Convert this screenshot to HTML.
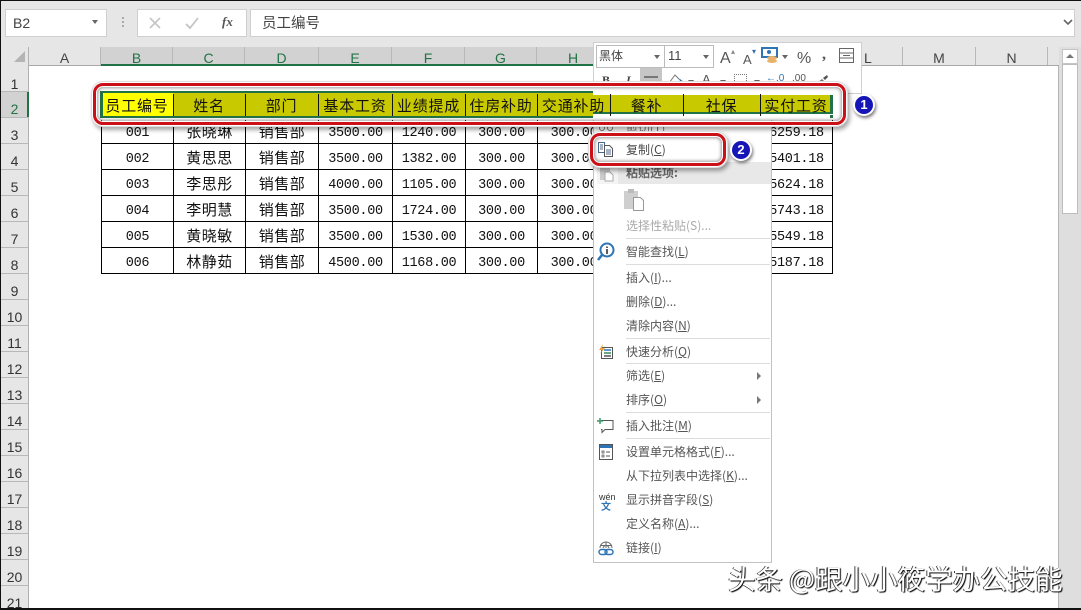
<!DOCTYPE html>
<html><head><meta charset="utf-8"><style>
html,body{margin:0;padding:0}
#p{position:relative;width:1081px;height:610px;overflow:hidden;background:#e6e6e6;font-family:"Liberation Sans","Noto Sans CJK SC",sans-serif;color:#444}
#p div,#p span.a{position:absolute;box-sizing:border-box}
.box{background:#fff;border:1px solid #cfcfcf}
.ch{top:47px;height:18px;font-size:14px;line-height:22px;text-align:center;color:#444;border-right:1px solid #b8b8b8}
.sel{background:#d2d2d2;color:#217346}
.rh{left:1px;width:27px;font-size:14px;text-align:center;color:#333;line-height:14px}
.rl{left:1px;width:28px;height:1px;background:#b8b8b8}
table{position:absolute;left:101px;top:117px;border-collapse:collapse;table-layout:fixed;background:#fff}
td{border:1px solid #000;height:19px;padding:4px 0 2px;text-align:center;font-size:15px;letter-spacing:.5px;color:#111;font-family:"Noto Sans CJK SC",sans-serif;line-height:19px;white-space:nowrap;overflow:hidden}
td.n{font-family:"Liberation Mono",monospace;font-size:13.5px;letter-spacing:-.3px;padding:6px 0 0}
.hd{font-size:15px;letter-spacing:.8px;color:#111;font-family:"Noto Sans CJK SC",sans-serif;text-align:center;top:96px;height:20px;line-height:20px;white-space:nowrap}
.vl{top:94px;height:22px;width:1px;background:#111}
.m{left:626px;font-size:12px;line-height:16px;color:#555;white-space:nowrap;font-family:"Noto Sans CJK SC",sans-serif}
.sep{left:626px;width:144px;height:1px;background:#dcdcdc}
.fr{border:3px solid #cc1018;border-radius:10px;box-shadow:0 0 0 1px #fff,0 0 0 2px #ddd,2px 3px 4px 2px rgba(0,0,0,.35),inset 0 0 0 1px #fff,inset 0 0 3px 2px rgba(90,90,90,.6)}
.bd{width:22px;height:22px;border-radius:50%;background:#1616b8;border:2px solid #fff;box-shadow:1px 2px 3px rgba(0,0,0,.55);color:#fff;font:bold 13px/18px "Liberation Sans",sans-serif;text-align:center}
.tri{width:0;height:0;border-left:4px solid #777;border-top:4px solid transparent;border-bottom:4px solid transparent}
.dn{width:0;height:0;border-top:4px solid #666;border-left:3.5px solid transparent;border-right:3.5px solid transparent}
</style></head><body><div id="p">

<div style="left:0;top:0;width:1081px;height:1px;background:#111"></div>
<div style="left:0;top:0;width:1px;height:610px;background:#111"></div>

<div class="box" style="left:5px;top:9px;width:102px;height:28px;font-size:14px;line-height:26px;padding-left:7px;color:#444">B2</div>
<div class="dn" style="left:92px;top:20px"></div>
<div style="left:122px;top:17px;width:2px;height:2px;background:#aaa;box-shadow:0 4px #aaa,0 8px #aaa"></div>
<div class="box" style="left:137px;top:9px;width:110px;height:28px"></div>
<svg style="position:absolute;left:148px;top:16px" width="80" height="14" viewBox="0 0 80 14"><path d="M2 2l10 10M12 2L2 12" stroke="#c4c4c4" stroke-width="1.6" fill="none"/><path d="M38 8l4 4 8-10" stroke="#c4c4c4" stroke-width="1.8" fill="none"/></svg>
<div style="left:222px;top:14px;font:italic bold 13px/16px 'Liberation Serif',serif;color:#555">fx</div>
<div class="box" style="left:250px;top:9px;width:825px;height:28px;font-size:14.5px;line-height:25px;padding-left:11px;color:#444;font-family:'Noto Sans CJK SC',sans-serif">员工编号</div>
<svg style="position:absolute;left:1063px;top:19px" width="10" height="8"><path d="M1 1l4 4 4-4" stroke="#666" stroke-width="1.6" fill="none"/></svg>

<div style="left:29px;top:65px;width:1029px;height:545px;background:#fff"></div>
<div style="left:1058px;top:65px;width:1px;height:545px;background:#b4b4b4"></div>

<div style="left:0;top:47px;width:29px;height:18px;border-right:1px solid #b8b8b8"></div>
<svg style="position:absolute;left:14px;top:50px" width="12" height="12"><path d="M11 1v11H0z" fill="#b4b4b4"/></svg>
<div class="ch" style="left:29px;width:72px">A</div>
<div class="ch sel" style="left:101px;width:72px">B</div>
<div class="ch sel" style="left:173px;width:72px">C</div>
<div class="ch sel" style="left:245px;width:74px">D</div>
<div class="ch sel" style="left:319px;width:73px">E</div>
<div class="ch sel" style="left:392px;width:73px">F</div>
<div class="ch sel" style="left:465px;width:72px">G</div>
<div class="ch sel" style="left:537px;width:73px">H</div>
<div class="ch sel" style="left:610px;width:73px">I</div>
<div class="ch sel" style="left:683px;width:77px">J</div>
<div class="ch sel" style="left:760px;width:72px">K</div>
<div class="ch" style="left:832px;width:71px;text-align:left;padding-left:32px">L</div>
<div class="ch" style="left:903px;width:73px">M</div>
<div class="ch" style="left:976px;width:72px">N</div>
<div style="left:29px;top:65px;width:1030px;height:1px;background:#a8a8a8"></div>
<div style="left:101px;top:64px;width:731px;height:2px;background:#217346"></div>

<div style="left:1px;top:91px;width:27px;height:26px;background:#d2d2d2"></div>
<div style="left:27px;top:91px;width:2px;height:26px;background:#217346"></div>
<div style="left:28px;top:47px;width:1px;height:44px;background:#b0b0b0"></div>
<div style="left:28px;top:117px;width:1px;height:493px;background:#b0b0b0"></div>
<div class="rl" style="top:91px"></div><div class="rl" style="top:117px"></div><div class="rl" style="top:143px"></div><div class="rl" style="top:169px"></div><div class="rl" style="top:195px"></div><div class="rl" style="top:221px"></div><div class="rl" style="top:247px"></div><div class="rl" style="top:273px"></div><div class="rl" style="top:299px"></div><div class="rl" style="top:325px"></div><div class="rl" style="top:351px"></div><div class="rl" style="top:377px"></div><div class="rl" style="top:403px"></div><div class="rl" style="top:429px"></div><div class="rl" style="top:455px"></div><div class="rl" style="top:481px"></div><div class="rl" style="top:507px"></div><div class="rl" style="top:533px"></div><div class="rl" style="top:559px"></div><div class="rl" style="top:585px"></div>
<div class="rh" style="top:77px">1</div><div class="rh" style="top:102px;color:#217346">2</div><div class="rh" style="top:128px">3</div><div class="rh" style="top:154px">4</div><div class="rh" style="top:180px">5</div><div class="rh" style="top:206px">6</div><div class="rh" style="top:232px">7</div><div class="rh" style="top:258px">8</div><div class="rh" style="top:284px">9</div><div class="rh" style="top:310px">10</div><div class="rh" style="top:336px">11</div><div class="rh" style="top:362px">12</div><div class="rh" style="top:388px">13</div><div class="rh" style="top:414px">14</div><div class="rh" style="top:440px">15</div><div class="rh" style="top:466px">16</div><div class="rh" style="top:492px">17</div><div class="rh" style="top:518px">18</div><div class="rh" style="top:544px">19</div><div class="rh" style="top:570px">20</div><div class="rh" style="top:596px">21</div>

<div style="left:1059px;top:47px;width:22px;height:563px;background:#dedede"></div>
<div style="left:1062px;top:49px;width:16px;height:15px;background:#fff;border:1px solid #c4c4c4"></div>
<svg style="position:absolute;left:1065px;top:53px" width="10" height="6"><path d="M1 5l4-4 4 4z" fill="#777"/></svg>
<div style="left:1062px;top:64px;width:16px;height:150px;background:#fff;border:1px solid #bdbdbd"></div>

<table>
<colgroup><col style="width:72px"><col style="width:72px"><col style="width:73px"><col style="width:74px"><col style="width:73px"><col style="width:72px"><col style="width:73px"><col style="width:73px"><col style="width:77px"><col style="width:72px"></colgroup>
<tr><td class="n">001</td><td>张晓琳</td><td>销售部</td><td class="n">3500.00</td><td class="n">1240.00</td><td class="n">300.00</td><td class="n">300.00</td><td></td><td></td><td class="n">6259.18</td></tr>
<tr><td class="n">002</td><td>黄思思</td><td>销售部</td><td class="n">3500.00</td><td class="n">1382.00</td><td class="n">300.00</td><td class="n">300.00</td><td></td><td></td><td class="n">5401.18</td></tr>
<tr><td class="n">003</td><td>李思彤</td><td>销售部</td><td class="n">4000.00</td><td class="n">1105.00</td><td class="n">300.00</td><td class="n">300.00</td><td></td><td></td><td class="n">5624.18</td></tr>
<tr><td class="n">004</td><td>李明慧</td><td>销售部</td><td class="n">3500.00</td><td class="n">1724.00</td><td class="n">300.00</td><td class="n">300.00</td><td></td><td></td><td class="n">5743.18</td></tr>
<tr><td class="n">005</td><td>黄晓敏</td><td>销售部</td><td class="n">3500.00</td><td class="n">1530.00</td><td class="n">300.00</td><td class="n">300.00</td><td></td><td></td><td class="n">5549.18</td></tr>
<tr><td class="n">006</td><td>林静茹</td><td>销售部</td><td class="n">4500.00</td><td class="n">1168.00</td><td class="n">300.00</td><td class="n">300.00</td><td></td><td></td><td class="n">5187.18</td></tr>
</table>

<div style="left:593px;top:42px;width:269px;height:52px;background:#fff;border:1px solid #cfcfcf"></div>
<div class="box" style="left:596px;top:45px;width:69px;height:23px;border-color:#bbb;font:12px/20px 'Noto Sans CJK SC',sans-serif;padding-left:2px;color:#444">黑体</div>
<div class="box" style="left:664px;top:45px;width:50px;height:23px;border-color:#bbb;font:13px/20px 'Liberation Sans',sans-serif;padding-left:3px;color:#444">11</div>
<div class="dn" style="left:654px;top:55px"></div><div class="dn" style="left:703px;top:55px"></div>
<div style="left:720px;top:49px;font:16px/20px 'Liberation Sans',sans-serif;color:#555">A</div><div style="left:731px;top:48px;font:8px/8px 'Liberation Sans',sans-serif;color:#888">▴</div>
<div style="left:743px;top:52px;font:13px/16px 'Liberation Sans',sans-serif;color:#555">A</div><div style="left:752px;top:48px;font:8px/8px 'Liberation Sans',sans-serif;color:#3a6fa5">▾</div>
<svg style="position:absolute;left:761px;top:47px" width="18" height="18"><rect x="1" y="1" width="15" height="9" fill="#fff" stroke="#2e75b6" stroke-width="2"/><circle cx="8" cy="5" r="2" fill="#2e75b6"/><ellipse cx="11" cy="11" rx="5" ry="2" fill="#e8b26a"/><ellipse cx="11" cy="14" rx="5" ry="2" fill="#e8b26a"/></svg>
<div class="dn" style="left:782px;top:55px"></div>
<div style="left:797px;top:49px;font:16px/20px 'Liberation Sans',sans-serif;color:#555">%</div>
<div style="left:822px;top:45px;font:bold 16px/20px 'Liberation Serif',serif;color:#555">,</div>
<svg style="position:absolute;left:839px;top:48px" width="16" height="16"><rect x=".5" y=".5" width="14" height="14" fill="#fff" stroke="#666"/><path d="M1 5h13M1 10h13M4 7.5h7" stroke="#666" fill="none"/></svg>
<div style="left:640px;top:68px;width:22px;height:26px;background:#c6c6c6"></div>
<div style="left:644px;top:76px;width:14px;height:2px;background:#777"></div>
<div style="left:602px;top:73px;font:bold 12px/14px 'Liberation Serif',serif;color:#444">B</div>
<div style="left:626px;top:73px;font:italic bold 12px/14px 'Liberation Serif',serif;color:#444">I</div>
<svg style="position:absolute;left:667px;top:72px" width="20" height="14"><path d="M2 11l6-8 6 6-3 3H4z" fill="#fff" stroke="#777"/><path d="M13 7l4 3v3h-4z" fill="#2e75b6"/></svg>
<div class="dn" style="left:688px;top:80px"></div>
<div style="left:702px;top:73px;font:13px/14px 'Liberation Sans',sans-serif;color:#555">A</div>
<div class="dn" style="left:720px;top:80px"></div>
<div style="left:734px;top:74px;width:13px;height:11px;border:1px dotted #777"></div>
<div class="dn" style="left:754px;top:80px"></div>
<div style="left:766px;top:72px;font:10px/14px 'Liberation Sans',sans-serif;color:#2e75b6">←.0</div>
<div style="left:792px;top:72px;font:10px/14px 'Liberation Sans',sans-serif;color:#555">.00</div>
<svg style="position:absolute;left:812px;top:73px" width="18" height="14"><path d="M2 12l8-6 3 3-7 4z" fill="#777"/><path d="M11 5l4-3 1 2-3 3z" fill="#555"/></svg>

<div style="left:593px;top:113px;width:179px;height:450px;background:#fff;border:1px solid #c2c2c2;border-top:0"></div>
<div style="left:618px;top:162px;width:153px;height:22px;background:#e8e8e8"></div>
<div style="left:597px;top:162px;width:21px;height:22px;background:#f4f4f4"></div>

<div class="m" style="top:121px;color:#777">剪切(T)</div>
<svg style="position:absolute;left:598px;top:122px" width="16" height="10"><circle cx="4" cy="6" r="2.5" fill="none" stroke="#777"/><circle cx="12" cy="6" r="2.5" fill="none" stroke="#777"/></svg>
<div class="m" style="top:142px;color:#4a4a4a">复制(<u>C</u>)</div>
<svg style="position:absolute;left:598px;top:142px" width="16" height="15"><path d="M.5 .5h6v10h-6z" fill="#fff" stroke="#4a6a8a"/><path d="M6.5 3.500h5l3 3v8h-8z" fill="#fff" stroke="#555"/><path d="M2 3h3M2 5h3M2 7h3M8 8h5M8 10h5M8 12h5" stroke="#4a6a8a"/></svg>
<div class="m" style="top:165px;font-weight:700;color:#666">粘贴选项:</div>
<svg style="position:absolute;left:600px;top:166px" width="14" height="16"><rect x="0" y="1" width="10" height="13" fill="#ccc"/><path d="M5 6h5l3 3v6H5z" fill="#fff" stroke="#aaa"/></svg>
<svg style="position:absolute;left:624px;top:188px" width="22" height="24"><rect x="0" y="3" width="14" height="18" fill="#cfcfcf"/><rect x="4" y="1" width="6" height="4" fill="#bbb"/><path d="M9.500 9.500h7l3 3v10h-10z" fill="#fff" stroke="#999"/></svg>
<div class="m" style="top:218px;color:#aaa">选择性粘贴(S)...</div>
<div class="sep" style="top:238px"></div>
<svg style="position:absolute;left:597px;top:242px" width="18" height="20"><circle cx="10" cy="8" r="6.500" fill="#fff" stroke="#2e75b6" stroke-width="2"/><path d="M5 13l-4 5" stroke="#2e75b6" stroke-width="2.500"/><path d="M10 4.500v1.500M10 7v5" stroke="#333" stroke-width="1.600"/></svg>
<div class="m" style="top:244px">智能查找(<u>L</u>)</div>
<div class="sep" style="top:264px"></div>
<div class="m" style="top:270px">插入(<u>I</u>)...</div>
<div class="m" style="top:294px">删除(<u>D</u>)...</div>
<div class="m" style="top:318px">清除内容(<u>N</u>)</div>
<div class="sep" style="top:338px"></div>
<svg style="position:absolute;left:598px;top:344px" width="16" height="15"><rect x="3.500" y="3.500" width="11" height="11" fill="#fff" stroke="#555"/><path d="M6 6h7" stroke="#2e75b6" stroke-width="1.500"/><path d="M6 9h7" stroke="#3a8a5a" stroke-width="1.500"/><path d="M6 12h7" stroke="#555" stroke-width="1.500"/><path d="M5 0L1 6h3l-2 4 5-6H4z" fill="#e8a33a"/></svg>
<div class="m" style="top:344px">快速分析(<u>Q</u>)</div>
<div class="sep" style="top:363px"></div>
<div class="m" style="top:368px">筛选(<u>E</u>)</div><div class="tri" style="left:757px;top:372px"></div>
<div class="m" style="top:392px">排序(<u>O</u>)</div><div class="tri" style="left:757px;top:396px"></div>
<div class="sep" style="top:412px"></div>
<svg style="position:absolute;left:597px;top:417px" width="17" height="17"><path d="M4 3.500h12v9H8l-3 3v-3H4" fill="#fff" stroke="#555"/><path d="M3 1v6M0 4h6" stroke="#3a9a6a" stroke-width="1.500"/></svg>
<div class="m" style="top:418px">插入批注(<u>M</u>)</div>
<div class="sep" style="top:438px"></div>
<svg style="position:absolute;left:599px;top:444px" width="14" height="16"><rect x=".5" y=".5" width="13" height="15" fill="#fff" stroke="#555"/><rect x="1" y="1" width="12" height="3" fill="#2e75b6"/><path d="M3 7h2v2H3zM3 11h2v2H3z" fill="none" stroke="#555" stroke-width=".8"/><path d="M7 8h4M7 12h4" stroke="#555"/></svg>
<div class="m" style="top:444px">设置单元格格式(<u>F</u>)...</div>
<div class="m" style="top:468px">从下拉列表中选择(<u>K</u>)...</div>
<div style="left:599px;top:493px;font:9px/9px 'Liberation Sans',sans-serif;color:#333">wén</div>
<div style="left:601px;top:501px;font:bold 10px/10px 'Noto Sans CJK SC',sans-serif;color:#2e75b6">文</div>
<div class="m" style="top:492px">显示拼音字段(<u>S</u>)</div>
<div class="m" style="top:516px">定义名称(<u>A</u>)...</div>
<svg style="position:absolute;left:598px;top:540px" width="17" height="17"><path d="M2 8a6 6 0 0 1 12 0M8 2v6M3 5.500h10M5 8a4 8 0 0 1 6 0" fill="none" stroke="#666"/><rect x="1" y="9.500" width="8" height="5" rx="2.500" fill="none" stroke="#2e75b6" stroke-width="1.500"/><rect x="7" y="9.500" width="8" height="5" rx="2.500" fill="none" stroke="#2e75b6" stroke-width="1.500"/></svg>
<div class="m" style="top:540px">链接(<u>I</u>)</div>

<div style="left:98px;top:87px;width:743px;height:33px;background:#fff"></div>
<div style="left:100px;top:91px;width:733px;height:27px;background:#217346"></div>
<div style="left:103px;top:93px;width:728px;height:23px;background:#c9c900"></div>
<div style="left:103px;top:93px;width:70px;height:23px;background:#ffff00"></div>
<div style="left:593px;top:113px;width:240px;height:5px;background:#fff"></div>
<div style="left:593px;top:112px;width:240px;height:2px;background:#217346"></div>
<div style="left:593px;top:89px;width:250px;height:6px;background:#fff"></div>
<div style="left:830px;top:95px;width:3px;height:20px;background:#217346"></div>
<div style="left:829px;top:114px;width:5px;height:5px;background:#217346;border:1px solid #fff"></div>
<div class="vl" style="left:173px"></div><div class="vl" style="left:245px"></div><div class="vl" style="left:318px"></div><div class="vl" style="left:392px"></div><div class="vl" style="left:465px"></div><div class="vl" style="left:537px"></div><div class="vl" style="left:610px"></div><div class="vl" style="left:683px"></div><div class="vl" style="left:760px"></div>
<div class="hd" style="left:101px;width:72px">员工编号</div>
<div class="hd" style="left:173px;width:72px">姓名</div>
<div class="hd" style="left:245px;width:73px">部门</div>
<div class="hd" style="left:318px;width:74px">基本工资</div>
<div class="hd" style="left:392px;width:73px">业绩提成</div>
<div class="hd" style="left:465px;width:72px">住房补助</div>
<div class="hd" style="left:537px;width:73px">交通补助</div>
<div class="hd" style="left:610px;width:73px">餐补</div>
<div class="hd" style="left:683px;width:77px">社保</div>
<div class="hd" style="left:760px;width:72px">实付工资</div>

<div class="fr" style="left:93px;top:83px;width:753px;height:42px"></div>
<div class="fr" style="left:590px;top:133px;width:136px;height:33px"></div>
<div class="bd" style="left:853px;top:94px">1</div>
<div class="bd" style="left:730px;top:139px">2</div>

<div style="left:728px;top:559px;width:345px;font:27.5px/36px 'Noto Sans CJK SC',sans-serif;color:#fff;text-shadow:1px 1px 1px #000,-1px 0 0 #444;white-space:nowrap">头条 @跟小小筱学办公技能</div>

<div style="left:0;top:608px;width:1081px;height:2px;background:#111"></div>
</div></body></html>
